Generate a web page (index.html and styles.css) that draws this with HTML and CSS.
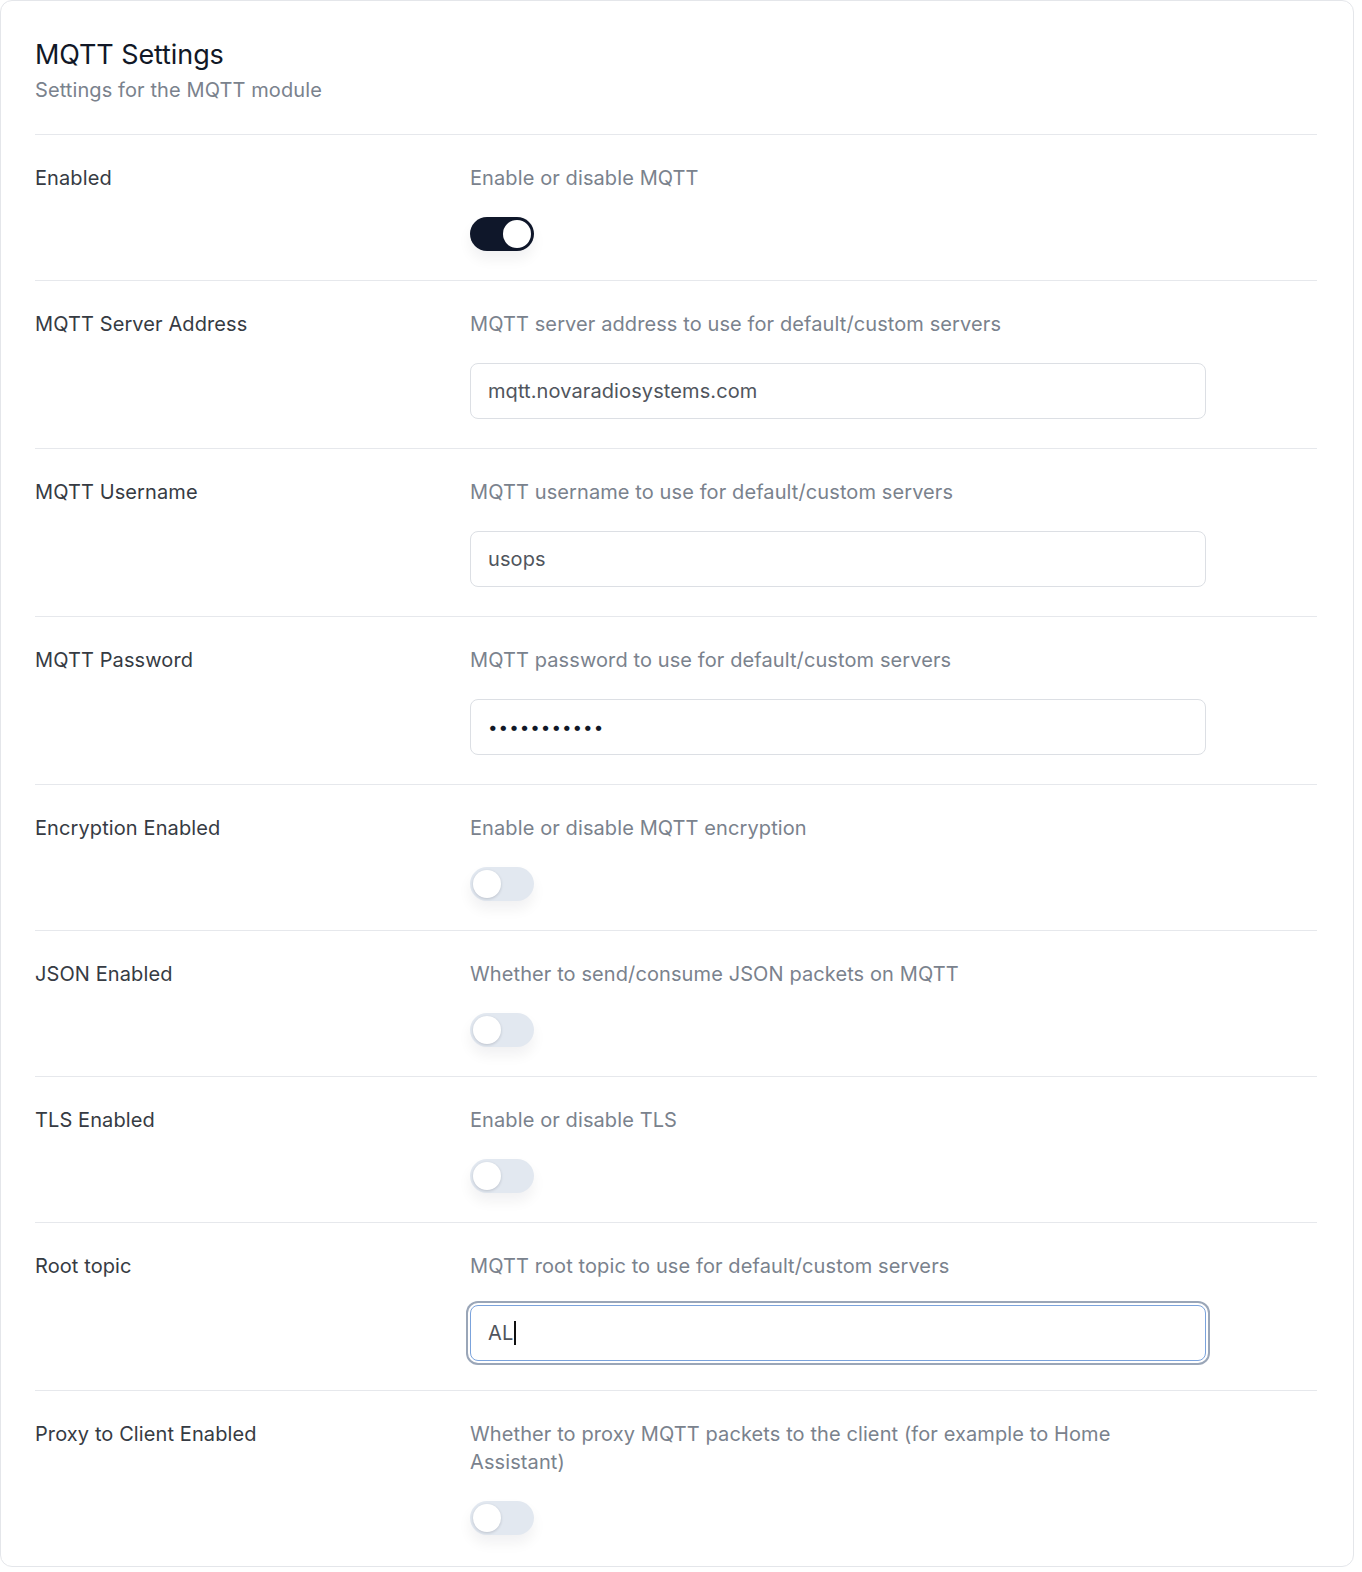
FILE: index.html
```html
<!DOCTYPE html>
<html>
<head>
<meta charset="utf-8">
<link rel="stylesheet" href="styles.css">
</head>
<body>
<div class="card">
  <div class="header">
    <h1 class="title">MQTT Settings</h1>
    <p class="subtitle">Settings for the MQTT module</p>
  </div>
  <div class="rows">
    <div class="row">
      <div class="label">Enabled</div>
      <div class="field">
        <div class="desc">Enable or disable MQTT</div>
        <div class="switch on"><span class="knob"></span></div>
      </div>
    </div>
    <div class="row">
      <div class="label">MQTT Server Address</div>
      <div class="field">
        <div class="desc">MQTT server address to use for default/custom servers</div>
        <div class="input">mqtt.novaradiosystems.com</div>
      </div>
    </div>
    <div class="row">
      <div class="label">MQTT Username</div>
      <div class="field">
        <div class="desc">MQTT username to use for default/custom servers</div>
        <div class="input">usops</div>
      </div>
    </div>
    <div class="row">
      <div class="label">MQTT Password</div>
      <div class="field">
        <div class="desc">MQTT password to use for default/custom servers</div>
        <div class="input pw">•••••••••••</div>
      </div>
    </div>
    <div class="row">
      <div class="label">Encryption Enabled</div>
      <div class="field">
        <div class="desc">Enable or disable MQTT encryption</div>
        <div class="switch"><span class="knob"></span></div>
      </div>
    </div>
    <div class="row">
      <div class="label">JSON Enabled</div>
      <div class="field">
        <div class="desc">Whether to send/consume JSON packets on MQTT</div>
        <div class="switch"><span class="knob"></span></div>
      </div>
    </div>
    <div class="row">
      <div class="label">TLS Enabled</div>
      <div class="field">
        <div class="desc">Enable or disable TLS</div>
        <div class="switch"><span class="knob"></span></div>
      </div>
    </div>
    <div class="row">
      <div class="label">Root topic</div>
      <div class="field">
        <div class="desc">MQTT root topic to use for default/custom servers</div>
        <div class="input focus">AL<span class="caret"></span></div>
      </div>
    </div>
    <div class="row">
      <div class="label">Proxy to Client Enabled</div>
      <div class="field">
        <div class="desc">Whether to proxy MQTT packets to the client (for example to Home Assistant)</div>
        <div class="switch"><span class="knob"></span></div>
      </div>
    </div>
  </div>
</div>
</body>
</html>
```

FILE: styles.css
```css
* { box-sizing: border-box; }
html, body { margin: 0; padding: 0; background: #ffffff; }
body {
  font-family: Inter, "Noto Sans", "Liberation Sans", sans-serif;
  color: #333840;
}
.card {
  width: 1354px;
  height: 1567px;
  border: 1px solid #e4e6ea;
  border-radius: 12px;
  padding: 38px 36px 0 34px;
  background: #fff;
  overflow: hidden;
}
.header {
  padding-bottom: 30px;
  border-bottom: 1px solid #e6e8ec;
}
.title {
  margin: 0;
  font-size: 27px;
  line-height: 32px;
  font-weight: 400;
  color: #111827;
  letter-spacing: -0.1px;
}
.subtitle {
  margin: 5px 0 0;
  font-size: 20px;
  line-height: 28px;
  color: #7a828d;
  letter-spacing: 0.1px;
}
.row {
  display: grid;
  grid-template-columns: 435px 736px;
  padding: 29px 0 29px;
  border-bottom: 1px solid #e6e8ec;
}
.row:last-child { border-bottom: none; }
.label {
  font-size: 20px;
  line-height: 28px;
  color: #363b43;
  letter-spacing: 0.1px;
}
.field {
  display: flex;
  flex-direction: column;
  align-items: flex-start;
  gap: 25px;
}
.desc {
  font-size: 20px;
  line-height: 28px;
  color: #7a828d;
  letter-spacing: 0.1px;
}
.switch {
  width: 64px;
  height: 34px;
  border-radius: 17px;
  background: #e2e8f0;
  position: relative;
  box-shadow: 0 8px 14px rgba(15, 23, 42, 0.06);
}
.switch .knob {
  position: absolute;
  top: 3px;
  left: 3px;
  width: 28px;
  height: 28px;
  border-radius: 50%;
  background: #fff;
  box-shadow: 0 1px 3px rgba(15, 23, 42, 0.18);
}
.switch.on { background: #0f172a; }
.switch.on .knob { left: 33px; }
.input {
  width: 736px;
  height: 56px;
  border: 1px solid #dcdfe4;
  border-radius: 8px;
  padding: 0 17px;
  display: flex;
  align-items: center;
  font-size: 20px;
  color: #50555d;
  background: #fff;
  letter-spacing: 0.1px;
}
.input.pw {
  font-size: 17px;
  color: #111827;
  letter-spacing: 1px;
}
.input.focus {
  border: 1px solid #7ba3dc;
  box-shadow: 0 0 0 2px #fff, 0 0 0 4px #9aa6b8;
}
.caret {
  display: inline-block;
  width: 1.5px;
  height: 24px;
  background: #111;
  margin-left: 1px;
}
```
